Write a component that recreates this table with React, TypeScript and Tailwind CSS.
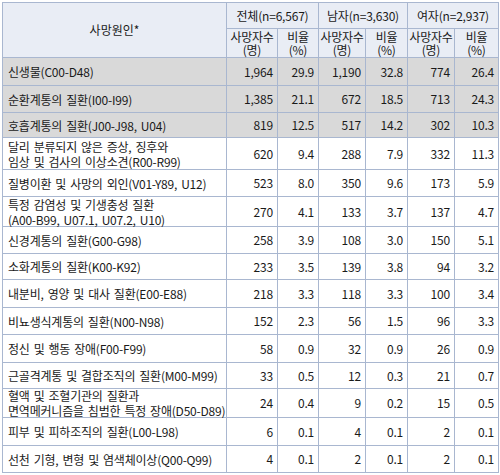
import React from "react";

type Row = { label: string[]; v: string[]; gray?: boolean; h: string };

const rows: Row[] = [
  { label: ["신생물(C00-D48)"], v: ["1,964", "29.9", "1,190", "32.8", "774", "26.4"], gray: true, h: "h-[27px]" },
  { label: ["순환계통의 질환(I00-I99)"], v: ["1,385", "21.1", "672", "18.5", "713", "24.3"], gray: true, h: "h-[26px]" },
  { label: ["호흡계통의 질환(J00-J98, U04)"], v: ["819", "12.5", "517", "14.2", "302", "10.3"], gray: true, h: "h-[24px]" },
  { label: ["달리 분류되지 않은 증상, 징후와", "임상 및 검사의 이상소견(R00-R99)"], v: ["620", "9.4", "288", "7.9", "332", "11.3"], h: "h-[31px]" },
  { label: ["질병이환 및 사망의 외인(V01-Y89, U12)"], v: ["523", "8.0", "350", "9.6", "173", "5.9"], h: "h-[26px]" },
  { label: ["특정 감염성 및 기생충성 질환", "(A00-B99, U07.1, U07.2, U10)"], v: ["270", "4.1", "133", "3.7", "137", "4.7"], h: "h-[29px]" },
  { label: ["신경계통의 질환(G00-G98)"], v: ["258", "3.9", "108", "3.0", "150", "5.1"], h: "h-[26px]" },
  { label: ["소화계통의 질환(K00-K92)"], v: ["233", "3.5", "139", "3.8", "94", "3.2"], h: "h-[25px]" },
  { label: ["내분비, 영양 및 대사 질환(E00-E88)"], v: ["218", "3.3", "118", "3.3", "100", "3.4"], h: "h-[27px]" },
  { label: ["비뇨생식계통의 질환(N00-N98)"], v: ["152", "2.3", "56", "1.5", "96", "3.3"], h: "h-[26px]" },
  { label: ["정신 및 행동 장애(F00-F99)"], v: ["58", "0.9", "32", "0.9", "26", "0.9"], h: "h-[27px]" },
  { label: ["근골격계통 및 결합조직의 질환(M00-M99)"], v: ["33", "0.5", "12", "0.3", "21", "0.7"], h: "h-[25px]" },
  { label: ["혈액 및 조혈기관의 질환과", "면역메커니즘을 침범한 특정 장애(D50-D89)"], v: ["24", "0.4", "9", "0.2", "15", "0.5"], h: "h-[28px]" },
  { label: ["피부 및 피하조직의 질환(L00-L98)"], v: ["6", "0.1", "4", "0.1", "2", "0.1"], h: "h-[27px]" },
  { label: ["선천 기형, 변형 및 염색체이상(Q00-Q99)"], v: ["4", "0.1", "2", "0.1", "2", "0.1"], h: "h-[26px]" },
];

const font = { fontFamily: '"Noto Sans CJK KR", "Noto Sans", sans-serif' };

export default function App() {
  return (
    <div className="w-[500px] h-[475px] bg-white pl-[2px] pt-[2px]" style={font}>
      <div className="grid grid-cols-[223px_50px_40px_46px_41px_46px_43px] gap-px bg-[#a9b7d0] p-px w-[497px] text-[12px] text-[#1a1a1a]">
        {/* header */}
        <div className="row-span-2 bg-[#e9edf5] flex items-center justify-center">사망원인*</div>
        <div className="col-span-2 h-[25px] bg-[#e9edf5] flex items-center justify-center tracking-[-0.2px]">전체(n=6,567)</div>
        <div className="col-span-2 h-[25px] bg-[#e9edf5] flex items-center justify-center tracking-[-0.2px]">남자(n=3,630)</div>
        <div className="col-span-2 h-[25px] bg-[#e9edf5] flex items-center justify-center tracking-[-0.2px]">여자(n=2,937)</div>
        {["사망자수\n(명)", "비율\n(%)", "사망자수\n(명)", "비율\n(%)", "사망자수\n(명)", "비율\n(%)"].map((t, i) => (
          <div key={i} className="h-[28px] bg-[#e9edf5] flex items-center justify-center text-center whitespace-pre-line leading-[13px] tracking-[-0.3px]">
            {t}
          </div>
        ))}
        {rows.map((r, ri) => (
          <React.Fragment key={ri}>
            <div className={`${r.h} ${r.gray ? "bg-[#d9d9d9]" : "bg-white"} flex items-center pl-[5px] leading-[15px] whitespace-pre tracking-[-0.2px] [word-spacing:1.5px]`}>
              {r.label.join("\n")}
            </div>
            {r.v.map((v, vi) => (
              <div key={vi} className={`${r.h} ${r.gray ? "bg-[#d9d9d9]" : "bg-white"} flex items-center justify-end pr-[4px] tracking-[-0.2px]`}>
                {v}
              </div>
            ))}
          </React.Fragment>
        ))}
      </div>
    </div>
  );
}
